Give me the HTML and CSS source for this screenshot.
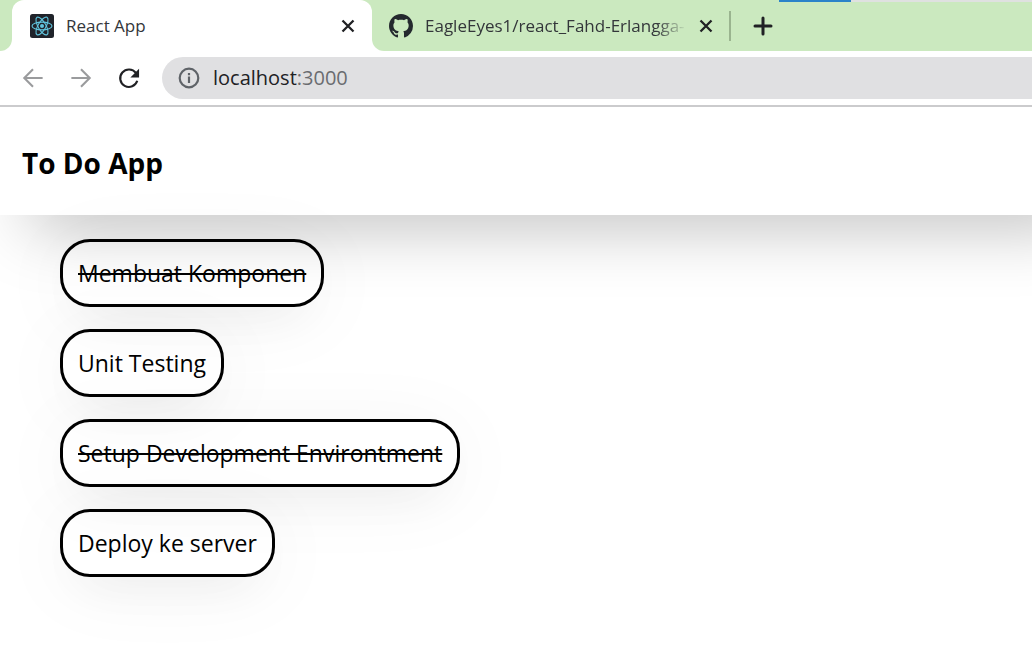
FILE: index.html
```html
<!DOCTYPE html>
<html lang="id">
<head>
<meta charset="utf-8">
<title>React App</title>
<link rel="stylesheet" href="styles.css">
</head>
<body>
<div class="browser">
  <div class="tab-strip">
    <div class="progress"><span class="progress-value"></span></div>
    <div class="strip-edge"></div>
    <div class="tab tab-active">
      <svg class="favicon" viewBox="0 0 24 24" aria-hidden="true">
        <rect width="24" height="24" rx="2.5" fill="#20232a"/>
        <g fill="none" stroke="#61c5de" stroke-width="1.1">
          <ellipse cx="12" cy="12" rx="10" ry="3.9"/>
          <ellipse cx="12" cy="12" rx="10" ry="3.9" transform="rotate(60 12 12)"/>
          <ellipse cx="12" cy="12" rx="10" ry="3.9" transform="rotate(120 12 12)"/>
        </g>
        <circle cx="12" cy="12" r="2" fill="#61c5de"/>
      </svg>
      <span class="tab-title">React App</span>
      <button class="icon-button" type="button" aria-label="Close tab">
        <svg class="close-icon" viewBox="0 0 14 14"><path d="M1.5 1.5l11 11M12.5 1.5l-11 11"/></svg>
      </button>
    </div>
    <div class="strip-rest">
      <div class="tab tab-inactive">
        <svg class="favicon" viewBox="0 0 16 16" aria-hidden="true">
          <path fill="#24292e" d="M8 0C3.58 0 0 3.58 0 8c0 3.54 2.29 6.53 5.47 7.59.4.07.55-.17.55-.38 0-.19-.01-.82-.01-1.49-2.01.37-2.53-.49-2.69-.94-.09-.23-.48-.94-.82-1.13-.28-.15-.68-.52-.01-.53.63-.01 1.08.58 1.23.82.72 1.21 1.87.87 2.33.66.07-.52.28-.87.51-1.07-1.78-.2-3.64-.89-3.64-3.95 0-.87.31-1.59.82-2.15-.08-.2-.36-1.02.08-2.12 0 0 .67-.21 2.2.82.64-.18 1.32-.27 2-.27s1.36.09 2 .27c1.53-1.04 2.2-.82 2.2-.82.44 1.1.16 1.92.08 2.12.51.56.82 1.27.82 2.15 0 3.07-1.87 3.75-3.65 3.95.29.25.54.73.54 1.48 0 1.07-.01 1.93-.01 2.2 0 .21.15.46.55.38A8.01 8.01 0 0 0 16 8c0-4.42-3.58-8-8-8z"/>
        </svg>
        <span class="tab-title tab-title-fade">EagleEyes1/react_Fahd-Erlangga-</span>
        <button class="icon-button" type="button" aria-label="Close tab">
          <svg class="close-icon" viewBox="0 0 14 14"><path d="M1.5 1.5l11 11M12.5 1.5l-11 11"/></svg>
        </button>
      </div>
      <span class="divider"></span>
      <button class="icon-button new-tab" type="button" aria-label="New tab">
        <svg class="plus-icon" viewBox="0 0 20 20"><path d="M10 2v16M2 10h16"/></svg>
      </button>
    </div>
  </div>
  <div class="toolbar">
    <button class="icon-button nav-muted" type="button" aria-label="Back">
      <svg class="nav-icon" viewBox="0 0 24 24"><path d="M22.500 12H3M12 2.500L2.500 12l9.500 9.500"/></svg>
    </button>
    <button class="icon-button nav-muted" type="button" aria-label="Forward">
      <svg class="nav-icon" viewBox="0 0 24 24"><path d="M1.500 12H21M12 2.500l9.500 9.500-9.500 9.500"/></svg>
    </button>
    <button class="icon-button nav-reload" type="button" aria-label="Reload">
      <svg class="nav-icon" viewBox="0 0 24 24"><path d="M19.500 6.500A9.500 9.500 0 1 0 21 15"/><path class="reload-tip" d="M23 2v9.500H13.500z"/></svg>
    </button>
    <div class="address">
      <svg class="info-icon" viewBox="0 0 22 22" aria-hidden="true"><circle cx="11" cy="11" r="9.300" fill="none" stroke="#5f6368" stroke-width="2.200"/><path d="M11 9.500v6.500M11 6v2.200" stroke="#5f6368" stroke-width="2.200"/></svg>
      <span class="address-text">localhost<span class="port">:3000</span></span>
    </div>
  </div>
</div>
<main class="page">
  <header class="app-header"><h1 class="app-title">To Do App</h1></header>
  <ul class="todo-list">
    <li class="todo todo-done">Membuat Komponen</li>
    <li class="todo">Unit Testing</li>
    <li class="todo todo-done">Setup Development Environtment</li>
    <li class="todo">Deploy ke server</li>
  </ul>
</main>
</body>
</html>
```
FILE: styles.css
```css
* { box-sizing: border-box; }

body {
  margin: 0;
  min-height: 100vh;
  display: flex;
  flex-direction: column;
  background: #fff;
  color: #000;
  font-family: "Segoe UI", "Open Sans", "Noto Sans", sans-serif;
}

.browser {
  flex: none;
  border-bottom: 2px solid #cbcbcd;
}

/* The strip turns white below the middle so the rounded corners of the
   green pieces blend into the active tab. */
.tab-strip {
  position: relative;
  display: flex;
  height: 51px;
  background: linear-gradient(#cbe9bf 50%, #fff 50%);
}

.progress {
  position: absolute;
  top: 0;
  left: 779px;
  right: 0;
  height: 2px;
  background: #dfe1e0;
}

.progress-value {
  display: block;
  width: 72px;
  height: 2px;
  background: #2b83c9;
}

.strip-edge {
  flex: none;
  width: 12px;
  background: #cbe9bf;
  border-bottom-right-radius: 12px;
}

.strip-rest {
  flex: 1;
  display: flex;
  align-items: center;
  background: #cbe9bf;
  border-bottom-left-radius: 12px;
}

.tab {
  display: flex;
  flex: none;
  align-items: center;
}

.tab-active {
  width: 360px;
  padding: 0 17px 0 18px;
  background: #fff;
  border-radius: 12px 12px 0 0;
}

.tab-inactive {
  width: 357px;
  padding: 0 16px 0 17px;
}

.favicon {
  flex: none;
  width: 24px;
  height: 24px;
}

.tab-title {
  flex: 1;
  min-width: 0;
  margin-left: 12px;
  white-space: nowrap;
  font-size: 17px;
  line-height: 24px;
  color: #33363a;
}

.tab-title-fade {
  margin-right: 12px;
  mask-image: linear-gradient(to right, #000 88%, transparent);
}

.icon-button {
  display: flex;
  flex: none;
  padding: 0;
  border: 0;
  background: none;
  color: #202124;
}

.icon-button svg {
  fill: none;
  stroke: currentColor;
  stroke-width: 2.3;
}

.close-icon { width: 14px; height: 14px; }
.plus-icon { width: 20px; height: 20px; }

.icon-button .plus-icon { stroke-width: 3; stroke-linecap: round; }

.divider {
  width: 2px;
  height: 30px;
  background: #9ab48f;
}

.new-tab { margin-left: 22px; }

.toolbar {
  display: flex;
  align-items: center;
  gap: 26px;
  height: 54px;
  padding-left: 22px;
}

.nav-icon { width: 22px; height: 22px; }
.nav-muted { color: #9a9b9d; }
.icon-button .reload-tip { fill: currentColor; stroke: none; }

.address {
  flex: 1;
  display: flex;
  align-items: center;
  gap: 13px;
  height: 42px;
  margin-left: -4px;
  padding-left: 16px;
  background: #e0e0e2;
  border-radius: 21px 0 0 21px;
}

.info-icon { width: 22px; height: 22px; }

.address-text {
  font-size: 20px;
  line-height: 28px;
  color: #202124;
}

.port { color: #6a6c70; }

.page {
  flex: 1;
  overflow: hidden;
}

.app-header {
  display: flex;
  align-items: center;
  height: 108px;
  margin-right: -80px;
  padding: 4px 22px 0;
  background: #fff;
  box-shadow: 0 34px 70px -30px rgba(0, 0, 0, 0.34);
}

.app-title {
  margin: 0;
  font-size: 28px;
  line-height: 36px;
  font-weight: 700;
}

.todo-list {
  display: flex;
  flex-direction: column;
  align-items: flex-start;
  gap: 22px;
  margin: 0;
  padding: 24px 60px 60px;
  list-style: none;
}

.todo {
  padding: 15px;
  border: 3px solid #000;
  border-radius: 30px;
  font-size: 23px;
  line-height: 32px;
  box-shadow:
    0 10px 80px rgba(0, 0, 0, 0.05),
    0 20px 50px -20px rgba(0, 0, 0, 0.07);
}

.todo-done { text-decoration: line-through; }
```
